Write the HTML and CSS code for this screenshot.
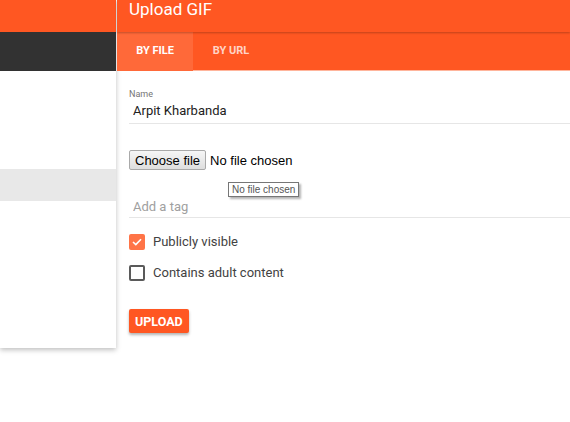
FILE: index.html
```html
<!DOCTYPE html>
<html lang="en">
<head>
  <meta charset="UTF-8">
  <meta name="viewport" content="width=device-width, initial-scale=1.0">
  <title>Upload GIF</title>
  <link rel="stylesheet" href="styles.css">
</head>
<body>
<div class="sidebar">
  <div class="sidebar-top"></div>
  <div class="sidebar-bar"></div>
  <div class="sidebar-list">
    <div class="list-item"></div>
    <div class="list-item"></div>
    <div class="list-item"></div>
    <div class="list-item selected"></div>
    <div class="list-item"></div>
  </div>
</div>

<div class="dialog">
  <div class="dialog-header">Upload GIF</div>
  <div class="tabs">
    <div class="tab active">BY FILE</div>
    <div class="tab">BY URL</div>
  </div>

  <form class="upload-form">
    <div class="field">
      <label>Name</label>
      <input type="text" value="Arpit Kharbanda">
    </div>

    <div class="file-row">
      <button type="button" class="choose-button">Choose file</button>
      <span class="file-status">No file chosen</span>
      <div class="tooltip">No file chosen</div>
    </div>

    <div class="field tag-field">
      <input type="text" placeholder="Add a tag">
    </div>

    <label class="check">
      <span class="box checked">
        <svg width="10" height="8" viewBox="0 0 10 8"><path d="M1 4 L3.8 6.6 L9 1.2" fill="none" stroke="#fff" stroke-width="1.6"/></svg>
      </span>
      Publicly visible
    </label>
    <label class="check">
      <span class="box"></span>
      Contains adult content
    </label>

    <button type="button" class="upload-button">UPLOAD</button>
  </form>
</div>
</body>
</html>
```

FILE: styles.css
```css
body {
  margin: 0;
  font-family: Roboto, 'Noto Sans', sans-serif;
  background: #fff;
  display: flex;
  align-items: flex-start;
  height: 422px;
  overflow: hidden;
}

.sidebar {
  width: 116px;
  height: 348px;
  background: #fff;
  box-shadow: 0 2px 5px rgba(0,0,0,0.25);
  flex-shrink: 0;
  position: relative;
  z-index: 1;
}

.sidebar-top {
  height: 32px;
  background: #ff5722;
}

.sidebar-bar {
  height: 39px;
  background: #323232;
}

.sidebar-list {
  padding-top: 2px;
}

.list-item {
  height: 32px;
}

.list-item.selected {
  background: #e8e8e8;
}

.dialog {
  flex: 1;
  margin-left: 1px;
  position: relative;
  z-index: 2;
}

.dialog-header {
  height: 32px;
  background: #ff5722;
  color: #fff;
  font-size: 17px;
  line-height: 18px;
  padding-left: 12px;
  box-shadow: 0 1px 2px rgba(0,0,0,0.25);
  position: relative;
  z-index: 1;
}

.tabs {
  display: flex;
  height: 38px;
  background: #ff5722;
  border-bottom: 1px solid #ffb59c;
}

.tab {
  width: 76px;
  text-align: center;
  color: rgba(255,255,255,0.75);
  font-size: 11px;
  font-weight: bold;
  line-height: 38px;
}

.tab.active {
  background: #ff6939;
  color: #fff;
  height: 39px;
}

.upload-form {
  padding: 17px 0 0 12px;
}

.field {
  border-bottom: 1px solid #e6e6e6;
  padding-bottom: 4px;
}

.field label {
  display: block;
  font-size: 9px;
  color: #757575;
  line-height: 12px;
}

.field input {
  border: none;
  outline: none;
  font-family: Roboto, sans-serif;
  font-size: 13px;
  color: #212121;
  padding: 2px 0 0 4px;
  width: 95%;
  background: transparent;
}

.field input::placeholder {
  color: #a0a0a0;
}

.file-row {
  display: flex;
  align-items: center;
  margin-top: 26px;
  position: relative;
  height: 20px;
}

.choose-button {
  font-family: 'Liberation Sans', Arial, sans-serif;
  font-size: 13px;
  color: #000;
  background: linear-gradient(#f6f6f6, #dedede);
  border: 1px solid #a9a9a9;
  border-radius: 2px;
  padding: 0 5px;
  height: 20px;
}

.file-status {
  font-family: 'Liberation Sans', Arial, sans-serif;
  font-size: 13px;
  margin-left: 4px;
  color: #000;
}

.tooltip {
  position: absolute;
  left: 99px;
  top: 32px;
  font-family: 'Liberation Sans', Arial, sans-serif;
  font-size: 10px;
  color: #555;
  background: #fff;
  border: 1px solid #767676;
  padding: 1px 3px;
  box-shadow: 2px 2px 2px rgba(0,0,0,0.3);
  z-index: 3;
}

.tag-field {
  margin-top: 26px;
  padding-bottom: 2px;
}

.tag-field input {
  padding-top: 0;
  padding-bottom: 0;
}

.check {
  display: flex;
  align-items: center;
  font-size: 13px;
  color: #424242;
  height: 15px;
}

.tag-field + .check {
  margin-top: 16px;
}

.check + .check {
  margin-top: 16px;
}

.box {
  width: 12px;
  height: 12px;
  border: 2px solid #5a5a5a;
  border-radius: 2px;
  margin-right: 8px;
  display: flex;
  align-items: center;
  justify-content: center;
}

.box.checked {
  background: #ff7447;
  border-color: #ff7447;
}

.upload-button {
  margin-top: 29px;
  background: #ff5722;
  color: #fff;
  border: none;
  border-radius: 2px;
  font-family: Roboto, sans-serif;
  font-weight: bold;
  font-size: 12.5px;
  height: 24px;
  padding: 0 6px;
  box-shadow: 0 2px 3px rgba(0,0,0,0.3);
}
```
